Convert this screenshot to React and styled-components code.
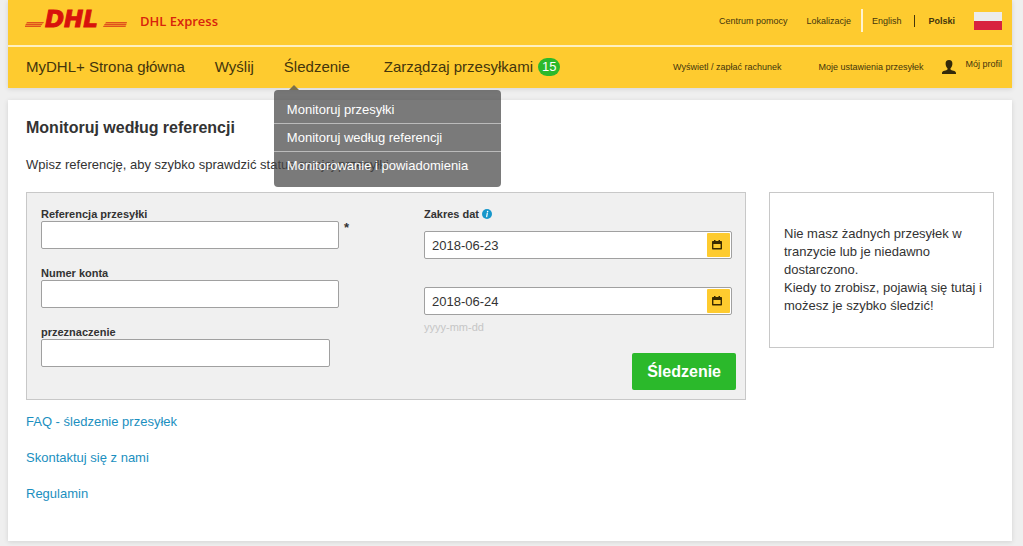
import React from "react";
import styled, { createGlobalStyle } from "styled-components";

const GlobalStyle = createGlobalStyle`
  * {
    box-sizing: border-box;
  }

  body {
    margin: 0;
    background: #efefef;
    color: #333;
    font-family: "Liberation Sans", Arial, sans-serif;
    font-size: 13px;
    line-height: 18px;
  }

  a {
    color: inherit;
    text-decoration: none;
  }

  input, button {
    font-family: inherit;
  }
`;

const menuItems = [
  "Monitoruj przesyłki",
  "Monitoruj według referencji",
  "Monitorowanie i powiadomienia",
];

const footerLinks = ["FAQ - śledzenie przesyłek", "Skontaktuj się z nami", "Regulamin"];

const Logo = () => (
  <svg width="102" height="30" viewBox="0 0 102 30" role="img" aria-label="DHL">
    <g fill="#e0521c">
      <path d="M2 17h17l-1 1.500H1zM1 19h16.500l-1 1.200H0zM0 20.800h16.200l-.6 1.200H0z" />
      <path d="M81 17h21l-.4 1.500H80zM79.500 19h22l-.4 1.200H79zM78.500 20.800h22.400l-.3 1.200H78z" />
    </g>
    <text
      x="20"
      y="22"
      fill="#d8120c"
      stroke="#d8120c"
      strokeWidth="1"
      fontFamily="DejaVu Sans, sans-serif"
      fontSize="23"
      fontWeight="bold"
      fontStyle="italic"
    >
      DHL
    </text>
  </svg>
);

const PersonIcon = () => (
  <svg width="14" height="14" viewBox="0 0 14 14" fill="#33290a" aria-hidden="true">
    <path d="M7 0C4.600 0 3.500 1.700 3.600 3.900c.1 1.900.9 3.400 1.900 4.300v1.200C4.800 10.400 0 10.600 0 12.800V14h14v-1.200c0-2.200-4.800-2.400-5.500-3.400V8.200c1-.9 1.800-2.400 1.900-4.300C10.500 1.700 9.400 0 7 0z" />
  </svg>
);

const CalendarIcon = () => (
  <svg width="10" height="10" viewBox="0 0 10 10" aria-hidden="true">
    <path d="M1 1h1V0h1.500v1h3V0H8v1h1c.6 0 1 .4 1 1v6.500c0 .6-.4 1-1 1H1c-.6 0-1-.4-1-1V2c0-.6.4-1 1-1zm.4 3v4.100h7.200V4z" fill="#3a2a00" fillRule="evenodd" />
  </svg>
);

const InfoIcon = () => (
  <svg width="10" height="10" viewBox="0 0 10 10" aria-hidden="true">
    <circle cx="5" cy="5" r="5" fill="#1697cb" />
    <circle cx="5.600" cy="2.500" r=".8" fill="#fff" />
    <path d="M5.300 4.200L4.700 7.600" stroke="#fff" strokeWidth="1.200" strokeLinecap="round" />
  </svg>
);

const DateField = ({ id, label, value }) => (
  <DateBox>
    <input id={id} type="text" aria-label={label} defaultValue={value} />
    <CalendarButton type="button" aria-label="Wybierz datę">
      <CalendarIcon />
    </CalendarButton>
  </DateBox>
);

const App = () => {
  return (
    <Page>
      <GlobalStyle />
      {/* Header */}
      <Header>
        <TopBar>
          <Brand href="#">
            <Logo />
            <span>DHL Express</span>
          </Brand>
          <TopLinks>
            <a href="#">Centrum pomocy</a>
            <a href="#">Lokalizacje</a>
            <Languages>
              <a href="#">English</a>
              <Separator />
              <CurrentLanguage href="#">Polski</CurrentLanguage>
            </Languages>
            <Flag />
          </TopLinks>
        </TopBar>
        <NavBar>
          <MainNav>
            <a href="#">MyDHL+ Strona główna</a>
            <a href="#">Wyślij</a>
            <NavItem>
              <a href="#">Śledzenie</a>
              <Menu>
                {menuItems.map((item) => (
                  <li key={item}>
                    <a href="#">{item}</a>
                  </li>
                ))}
              </Menu>
            </NavItem>
            <BadgeLink href="#">
              Zarządzaj przesyłkami
              <Badge>15</Badge>
            </BadgeLink>
          </MainNav>
          <SideNav>
            <a href="#">Wyświetl / zapłać rachunek</a>
            <a href="#">Moje ustawienia przesyłek</a>
            <Profile href="#">
              <PersonIcon />
              <span>Mój profil</span>
            </Profile>
          </SideNav>
        </NavBar>
      </Header>

      {/* Tracking by reference */}
      <Main>
        <h1>Monitoruj według referencji</h1>
        <p>Wpisz referencję, aby szybko sprawdzić status swojej przesyłki</p>
        <Columns>
          <Form onSubmit={(e) => e.preventDefault()}>
            <Fields>
              <Field>
                <label htmlFor="reference">Referencja przesyłki</label>
                <InputRow>
                  <TextInput id="reference" type="text" />
                  <Required>*</Required>
                </InputRow>
              </Field>
              <Field>
                <label htmlFor="account">Numer konta</label>
                <TextInput id="account" type="text" />
              </Field>
              <Field>
                <label htmlFor="destination">przeznaczenie</label>
                <TextInput id="destination" type="text" $narrow />
              </Field>
            </Fields>
            <DateColumn>
              <DateLabel htmlFor="dateFrom">
                Zakres dat <InfoIcon />
              </DateLabel>
              <DateRange>
                <DateField id="dateFrom" label="Zakres dat od" value="2018-06-23" />
                <DateField id="dateTo" label="Zakres dat do" value="2018-06-24" />
              </DateRange>
              <Hint>yyyy-mm-dd</Hint>
              <Submit type="submit">Śledzenie</Submit>
            </DateColumn>
          </Form>
          <Notice>
            Nie masz żadnych przesyłek w tranzycie lub je niedawno dostarczono.
            <br />
            Kiedy to zrobisz, pojawią się tutaj i możesz je szybko śledzić!
          </Notice>
        </Columns>
        <Links>
          {footerLinks.map((item) => (
            <li key={item}>
              <a href="#">{item}</a>
            </li>
          ))}
        </Links>
      </Main>
    </Page>
  );
};

// Styled Components started below
// ------------------------------------------------------------------
const Page = styled.div`
  padding: 0 11px 5px 8px;
`;

const Header = styled.header`
  background: #fecb2f;
  color: #44350c;
  box-shadow: 0 1px 5px rgba(0, 0, 0, 0.12);
`;

const TopBar = styled.div`
  display: flex;
  justify-content: space-between;
  height: 47px;
  padding: 0 10px 0 17px;
  border-bottom: 2px solid #fff0c0;
`;

const Brand = styled.a`
  display: flex;
  align-items: center;
  gap: 13px;
  height: 42px;
  color: #d8230c;
  font-family: "Open Sans", sans-serif;
  font-weight: 600;

  & svg {
    margin-bottom: 3px;
  }
`;

const TopLinks = styled.nav`
  display: flex;
  align-items: center;
  gap: 19px;
  height: 41px;
  font-size: 9px;
`;

const Languages = styled.div`
  display: flex;
  align-items: center;
  gap: 13px;
  height: 23px;
  margin-left: -9px;
  padding-left: 9px;
  border-left: 2px solid #fff3cf;
`;

const Separator = styled.span`
  width: 1px;
  height: 12px;
  background: #44350c;
`;

const CurrentLanguage = styled.a`
  font-weight: bold;
`;

const Flag = styled.span`
  width: 28px;
  height: 18px;
  background: linear-gradient(#ececec 50%, #d8233f 50%);
`;

const NavBar = styled.div`
  display: flex;
  justify-content: space-between;
  height: 41px;
  padding: 0 10px 2px 18px;
`;

const MainNav = styled.nav`
  display: flex;
  align-items: center;
  gap: 30px;
  font-size: 15px;
  white-space: nowrap;
`;

const NavItem = styled.div`
  position: relative;
  padding-right: 4px;
`;

const Menu = styled.ul`
  position: absolute;
  z-index: 1;
  top: 32px;
  left: -10px;
  width: 227px;
  margin: 0;
  padding: 6px 0 8px;
  border-radius: 4px;
  background: rgba(70, 70, 70, 0.72);
  color: #fff;
  font-size: 13px;
  list-style: none;

  &::before {
    content: "";
    position: absolute;
    bottom: 100%;
    left: 15px;
    border: 5px solid transparent;
    border-top: 0;
    border-bottom-color: #7b6f49;
  }

  & li {
    padding: 0 13px;
    line-height: 27px;
  }

  & li + li {
    border-top: 1px solid #bbb;
  }
`;

const BadgeLink = styled.a`
  display: flex;
  align-items: center;
  gap: 5px;
`;

const Badge = styled.span`
  padding: 0 4px;
  border-radius: 9px;
  background: #2bb92b;
  color: #fff;
  font-size: 13px;
`;

const SideNav = styled.nav`
  display: flex;
  align-items: center;
  gap: 37px;
  font-size: 9px;
  white-space: nowrap;
`;

const Profile = styled.a`
  display: flex;
  gap: 9px;
  margin-left: -18px;
  line-height: 9px;
`;

const Main = styled.main`
  margin-top: 12px;
  padding: 18px 18px 29px;
  background: #fff;
  box-shadow: 0 1px 5px rgba(0, 0, 0, 0.12);

  & h1 {
    margin: 0;
    font-size: 16px;
    line-height: 20px;
  }

  & p {
    margin: 18px 0;
  }
`;

const Columns = styled.div`
  display: grid;
  grid-template-columns: minmax(0, 1fr) 225px;
  align-items: start;
  gap: 23px;
`;

const Form = styled.form`
  display: grid;
  grid-template-columns: minmax(0, 1fr) 312px;
  gap: 70px;
  padding: 14px 9px 9px 14px;
  border: 1px solid #c8c8c8;
  background: #f0f0f0;
`;

const Fields = styled.div`
  display: flex;
  flex-direction: column;
  gap: 17px;
`;

const Field = styled.div`
  & label {
    display: block;
    font-size: 11px;
    font-weight: bold;
    line-height: 14px;
  }
`;

const InputRow = styled.div`
  display: flex;
  gap: 5px;
`;

const TextInput = styled.input`
  display: block;
  width: ${(props) => (props.$narrow ? "289px" : "298px")};
  max-width: 100%;
  height: 28px;
  padding: 0 7px;
  border: 1px solid #a0a0a0;
  border-radius: 2px;
  background: #fff;
  font-size: 13px;
`;

const Required = styled.span`
  font-weight: bold;
  line-height: 14px;
`;

const DateColumn = styled.div`
  display: flex;
  flex-direction: column;
`;

const DateLabel = styled.label`
  display: flex;
  align-items: center;
  gap: 3px;
  font-size: 11px;
  font-weight: bold;
  line-height: 14px;
`;

const DateRange = styled.div`
  display: flex;
  flex-direction: column;
  gap: 28px;
  margin: 10px 4px 5px 0;
`;

const DateBox = styled.div`
  display: flex;
  height: 28px;
  padding: 1px;
  border: 1px solid #a0a0a0;
  border-radius: 2px;
  background: #fff;

  & input {
    flex: 1;
    min-width: 0;
    padding: 0 6px;
    border: none;
    outline: none;
    background: none;
    color: #333;
    font-size: 13px;
  }
`;

const CalendarButton = styled.button`
  display: flex;
  align-items: center;
  justify-content: center;
  width: 23px;
  padding: 0 4px 0 0;
  border: none;
  border-radius: 1px;
  background: #fecb2f;
  cursor: pointer;
`;

const Hint = styled.span`
  color: #c6c6c6;
  font-size: 11px;
  line-height: 14px;
`;

const Submit = styled.button`
  align-self: flex-end;
  height: 37px;
  margin-top: 19px;
  padding: 0 15px;
  border: none;
  border-radius: 2px;
  background: #2bb92b;
  color: #fff;
  font-size: 16px;
  font-weight: bold;
  cursor: pointer;
`;

const Notice = styled.aside`
  padding: 32px 10px 32px 14px;
  border: 1px solid #c8c8c8;
`;

const Links = styled.ul`
  margin: 4px 0 0;
  padding: 0;
  color: #1b8fc0;
  line-height: 36px;
  list-style: none;
`;

export default App;
